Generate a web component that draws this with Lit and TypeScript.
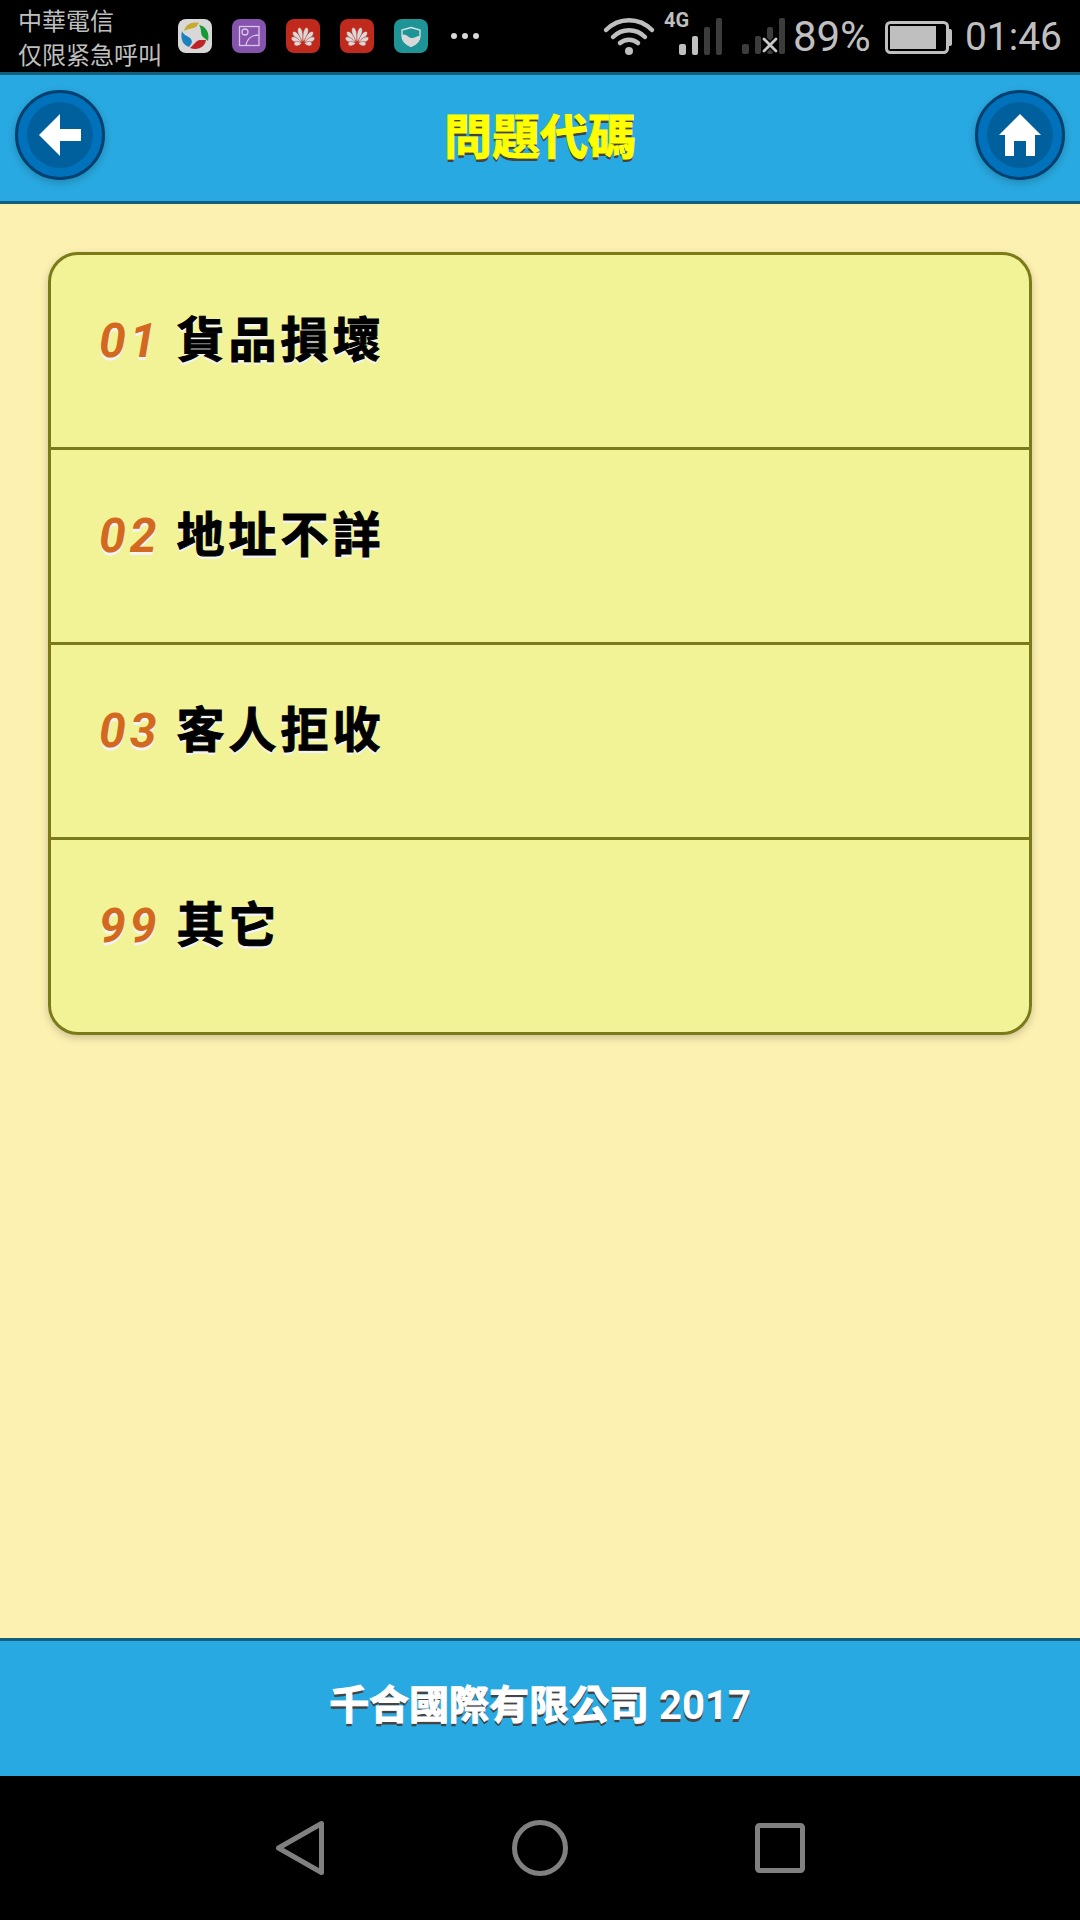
import { LitElement, html, css, svg } from "lit";
import { customElement, property } from "lit/decorators.js";

interface IssueCode {
  code: string;
  label: string;
}

const ISSUE_CODES: IssueCode[] = [
  { code: "01", label: "貨品損壞" },
  { code: "02", label: "地址不詳" },
  { code: "03", label: "客人拒收" },
  { code: "99", label: "其它" },
];

// One petal of the flower logo, pointing up from the base of the fan.
const petal = (angle: number, length: number) => svg`
  <path
    transform="translate(17 24.5) rotate(${angle})"
    d="M0 -1.5 C-3 ${-length * 0.5} -3.2 ${-length * 0.95} 0 ${-length} C3.2 ${-length * 0.95} 3 ${-length * 0.5} 0 -1.5Z"
  />`;

const flower = html`<svg class="app red" viewBox="0 0 34 34" aria-hidden="true">
  <g fill="#dadada" stroke="#c02a1d" stroke-width="0.5">
    ${petal(-14, 16.5)}${petal(14, 16.5)}${petal(-40, 15.5)}${petal(40, 15.5)}
    ${petal(-64, 13)}${petal(64, 13)}${petal(-92, 9)}${petal(92, 9)}
  </g>
</svg>`;

@customElement("status-bar")
class StatusBar extends LitElement {
  static styles = css`
    :host {
      display: flex;
      align-items: center;
      justify-content: space-between;
      height: 72px;
      padding: 0 18px;
      box-sizing: border-box;
      background: #000;
      color: #bfbfbf;
      font-family: Roboto, "Noto Sans CJK TC", "Noto Sans CJK SC", sans-serif;
    }
    .side {
      display: flex;
      align-items: center;
    }
    .left {
      gap: 20px;
    }
    .right {
      gap: 12px;
    }
    .carrier {
      width: 140px;
      font-size: 24px;
      line-height: 32px;
      white-space: nowrap;
      padding-top: 4px;
    }
    .carrier div:last-child {
      font-family: "Noto Sans CJK SC", sans-serif;
    }
    .app {
      display: block;
      width: 34px;
      height: 34px;
      border-radius: 8px;
    }
    .white {
      background: #d8d8d8;
    }
    .purple {
      background: #8653ae;
    }
    .red {
      background: #c02a1d;
    }
    .teal {
      background: #1f9497;
    }
    .glyph {
      display: block;
      height: 72px;
      overflow: visible;
    }
    .net {
      font-size: 20px;
      font-weight: 700;
    }
    .level,
    .clock {
      line-height: 72px;
      padding-top: 2px;
    }
    .level {
      font-size: 42px;
    }
    .clock {
      font-size: 39px;
    }
  `;

  render() {
    return html`
      <div class="side left">
        <div class="carrier">
          <div>中華電信</div>
          <div lang="zh-CN">仅限紧急呼叫</div>
        </div>
        <svg class="app white" viewBox="0 0 34 34" aria-hidden="true">
          <path fill="#c6ab2c" d="M6 12 C8 5 14 2.500 21 4 L18 8 C15 10 11 9 6 12Z" />
          <path fill="#159a35" d="M21 6 C28 7 32 14 30 22 L25 18 C22 15 24 10 21 6Z" />
          <path fill="#bd2428" d="M28 21 C27 28 20 32 12 29 L17 24 C20 20 23 21 28 21Z" />
          <path fill="#1c80bc" d="M4 12 C2 20 5 26 11 28 C13 25 15 24 13 20 C11 17 6 17 4 12Z" />
        </svg>
        <svg class="app purple" viewBox="0 0 34 34" aria-hidden="true">
          <g fill="none" stroke="#d9c6e6" stroke-width="1.3">
            <rect x="7.5" y="7.5" width="19.5" height="19" />
            <circle cx="13" cy="13" r="3" />
            <path d="M14 26.5 C15 20 20 16 27 16" />
          </g>
        </svg>
        ${flower} ${flower}
        <svg class="app teal" viewBox="0 0 34 34" aria-hidden="true">
          <path d="M17 8.5 L26 11 V17 C26 22 23 25 17 27.5 C11 25 8 22 8 17 V11Z" fill="none" stroke="#d4e4e4" stroke-width="1.3" />
          <path d="M8 16 C12 14 15 20 19 19 C22 18.5 23 16.5 26 17 C26 22 23 25 17 27.5 C11 25 8 22 8 16Z" fill="#d8d8d8" />
        </svg>
        <svg class="glyph" width="34" viewBox="0 0 34 72" fill="#d8d8d8" aria-hidden="true">
          <circle cx="6" cy="36" r="3" /><circle cx="17" cy="36" r="3" /><circle cx="28" cy="36" r="3" />
        </svg>
      </div>
      <div class="side right">
        <svg class="glyph" width="49" viewBox="602 0 49 72" role="img" aria-label="Wi-Fi">
          <g fill="none" stroke="#bfbfbf" stroke-width="4.5" stroke-linecap="round">
            <path d="M605 30 C618 17 638 17 651 30" />
            <path d="M612 37 C621 28 635 28 644 37" />
            <path d="M619 43 C624 38.5 632 38.5 637 43" />
          </g>
          <circle cx="628" cy="51" r="4" fill="#bfbfbf" />
        </svg>
        <svg class="glyph" width="64" viewBox="663 0 64 72" fill="#bfbfbf" role="img" aria-label="4G">
          <text class="net" x="663" y="27">4G</text>
          <rect x="678" y="44" width="7" height="11" rx="2" />
          <rect x="691" y="36" width="6" height="19" rx="2" />
          <g fill="#3c3c3c">
            <rect x="703" y="27" width="6" height="28" rx="2" />
            <rect x="715" y="18" width="6" height="37" rx="2" />
          </g>
        </svg>
        <svg class="glyph" width="41" viewBox="739 0 41 72" role="img" aria-label="SIM 2">
          <g fill="#3c3c3c">
            <rect x="741" y="44" width="7" height="10" rx="2" />
            <rect x="754" y="36" width="6" height="18" rx="2" />
            <rect x="766" y="27" width="6" height="27" rx="2" />
            <rect x="778" y="18" width="6" height="36" rx="2" />
          </g>
          <path d="M763 39 L775 51 M775 39 L763 51" stroke="#000" stroke-width="6" />
          <path d="M763 39 L775 51 M775 39 L763 51" stroke="#c8c8c8" stroke-width="2.8" stroke-linecap="round" />
        </svg>
        <span class="level">89%</span>
        <svg class="glyph" width="70" viewBox="882 0 70 72" role="img" aria-label="89%">
          <rect x="885.5" y="22.5" width="61" height="30" rx="4" fill="none" stroke="#bfbfbf" stroke-width="3" />
          <rect x="889" y="26" width="46" height="23" fill="#bfbfbf" />
          <path d="M947 29 h2 q2 0 2 2 v13 q0 2 -2 2 h-2z" fill="#bfbfbf" />
        </svg>
        <span class="clock">01:46</span>
      </div>
    `;
  }
}

@customElement("issue-list")
class IssueList extends LitElement {
  @property({ attribute: false }) items: IssueCode[] = [];

  static styles = css`
    .card {
      list-style: none;
      margin: 0;
      padding: 0;
      border: 3px solid #7b7a1a;
      border-radius: 30px;
      overflow: hidden;
      background: #f1f396;
      box-shadow: 0 3px 9px rgba(0, 0, 0, 0.2);
    }
    .item + .item {
      border-top: 3px solid #7b7a1a;
    }
    .row {
      display: flex;
      align-items: baseline;
      gap: 16px;
      width: 100%;
      padding: 50px 48px 70px;
      border: 0;
      background: none;
      color: #000;
      font: 700 48px/72px Roboto, "Noto Sans CJK TC", sans-serif;
      letter-spacing: 4px;
      text-align: left;
      text-shadow: 0 3px 0 #f3f3f3;
      cursor: pointer;
    }
    .code {
      color: #d2691e;
      font-style: italic;
    }
    .label {
      -webkit-text-stroke: 1px currentColor;
    }
  `;

  render() {
    return html`
      <ul class="card">
        ${this.items.map(
          (item) => html`<li class="item">
            <button class="row" type="button">
              <span class="code">${item.code}</span><span class="label">${item.label}</span>
            </button>
          </li>`
        )}
      </ul>
    `;
  }
}

@customElement("app-root")
class AppRoot extends LitElement {
  static styles = css`
    :host {
      display: flex;
      flex-direction: column;
      min-height: 100vh;
      background: #fdf1b2;
      font-family: Roboto, "Noto Sans CJK TC", sans-serif;
    }
    .header {
      display: flex;
      align-items: center;
      justify-content: space-between;
      padding: 15px 15px 15px;
      background: #29a9e1;
      border-top: 3px solid #145f7e;
      border-bottom: 3px solid #145f7e;
    }
    .title {
      margin: 0;
      color: #ff0;
      font-size: 48px;
      line-height: 96px;
      font-weight: 700;
      text-shadow: 0 3px 0 #444;
      -webkit-text-stroke: 1px currentColor;
    }
    .round {
      display: grid;
      place-items: center;
      align-self: flex-start;
      width: 90px;
      height: 90px;
      box-sizing: border-box;
      border: 3px solid #00406f;
      border-radius: 50%;
      background: #0072bc;
      box-shadow: 0 3px 9px rgba(0, 0, 0, 0.2);
    }
    .disc {
      display: grid;
      place-items: center;
      width: 66px;
      height: 66px;
      border-radius: 50%;
      background: #00609e;
    }
    .icon {
      width: 42px;
      height: 42px;
      fill: #fff;
    }
    .main {
      flex: 1;
      padding: 48px;
    }
    .footer {
      padding: 25px 48px 30px;
      background: #29a9e1;
      border-top: 3px solid #145f7e;
      color: #fff;
      font-size: 40px;
      line-height: 80px;
      font-weight: 700;
      text-align: center;
      text-shadow: 0 3px 0 #444;
    }
    .company {
      -webkit-text-stroke: 1px currentColor;
    }
    .nav {
      display: flex;
      align-items: center;
      justify-content: center;
      gap: 160px;
      height: 144px;
      background: #000;
    }
    .key {
      display: block;
      width: 80px;
      height: 80px;
      padding: 0;
      border: 0;
      background: none;
      cursor: pointer;
    }
    .key svg {
      display: block;
      fill: none;
      stroke: #808080;
      stroke-width: 5;
      stroke-linejoin: round;
    }
  `;

  render() {
    return html`
      <status-bar></status-bar>
      <header class="header">
        <a class="round" href="#back" aria-label="返回">
          <span class="disc">
            <svg class="icon" viewBox="0 0 14 14" aria-hidden="true">
              <polygon points="7,5 7,0 0,7 7,14 7,9 14,9 14,5" />
            </svg>
          </span>
        </a>
        <h1 class="title">問題代碼</h1>
        <a class="round" href="#home" aria-label="首頁">
          <span class="disc">
            <svg class="icon" viewBox="0 0 14 14" aria-hidden="true">
              <polygon points="7,0 0,7 2,7 2,14 5,14 5,9 9,9 9,14 12,14 12,7 14,7" />
            </svg>
          </span>
        </a>
      </header>
      <main class="main">
        <issue-list .items=${ISSUE_CODES}></issue-list>
      </main>
      <footer class="footer"><span class="company">千合國際有限公司</span> 2017</footer>
      <nav class="nav">
        <button class="key" type="button" aria-label="返回">
          <svg viewBox="0 0 80 80"><path d="M18.5 40 L61.500 15.5 V64.500Z" /></svg>
        </button>
        <button class="key" type="button" aria-label="主畫面">
          <svg viewBox="0 0 80 80"><circle cx="40" cy="40" r="25.5" /></svg>
        </button>
        <button class="key" type="button" aria-label="最近使用">
          <svg viewBox="0 0 80 80"><rect x="17.5" y="17.5" width="45" height="45" rx="2" /></svg>
        </button>
      </nav>
    `;
  }
}
